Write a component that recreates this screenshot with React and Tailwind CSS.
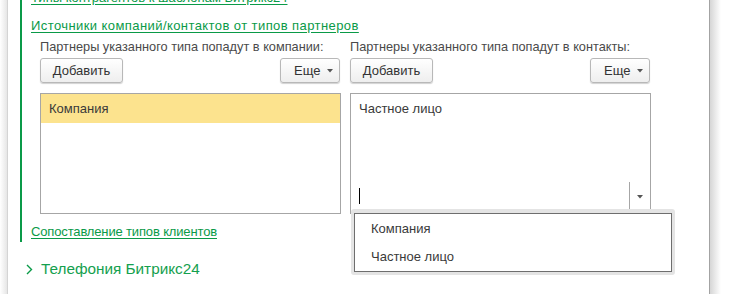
import React from "react";

function Btn({ children, w }) {
  return (
    <div
      className={`${w} h-[25px] flex items-center border border-[#b8b8b8] rounded-[3px] bg-gradient-to-b from-white to-[#eeeeee] shadow-[0_1px_1px_rgba(0,0,0,0.18)] text-[#333] text-[13px] leading-[14px]`}
    >
      {children}
    </div>
  );
}

function Tri({ cls = "" }) {
  return (
    <svg width="6" height="4" viewBox="0 0 6 4" className={cls}>
      <path d="M0 0 L6 0 L3 3.5 Z" fill="#555" />
    </svg>
  );
}

function Column({ label, children }) {
  return (
    <div className="w-[300px] flex flex-col">
      <div className="h-[14px] leading-[14px] text-[12.75px] text-[#4a4a4a] whitespace-nowrap">{label}</div>
      <div className="mt-[4px] flex justify-between">
        <Btn w="w-[83px] justify-center">Добавить</Btn>
        <Btn w="w-[60px] pl-[13px]">
          <span>Еще</span>
          <Tri cls="ml-[7px] mt-[1px]" />
        </Btn>
      </div>
      <div className="mt-[10px] relative h-[121px] w-[301px] border border-[#a6a6a6] bg-white">
        {children}
      </div>
    </div>
  );
}

export default function App() {
  return (
    <div className="w-[749px] h-[294px] overflow-hidden bg-white flex font-['Liberation_Sans',Arial,sans-serif] text-[13px]">
      <div className="w-[7px] h-full bg-gradient-to-r from-white to-[#e6e6e6]" />
      <div className="w-[703px] h-full border-l border-l-[#d4d4d4] border-r border-r-[#a3a3a3] bg-white pl-[12px] flex flex-col">
        <div className="border-l-2 border-[#0a9a48] pl-[9px] pb-[3px] flex flex-col">
          <div className="mt-[-9px] h-[14px] leading-[14px] text-[#0a9a48] underline underline-offset-[2px] whitespace-nowrap">
            Типы контрагентов к шаблонам Битрикс24
          </div>
          <div className="mt-[14px] h-[14px] leading-[14px] text-[#0a9a48] tracking-[0.42px] underline underline-offset-[2px] whitespace-nowrap">
            Источники компаний/контактов от типов партнеров
          </div>
          <div className="mt-[7px] ml-[9px] flex gap-[10px]">
            <Column label="Партнеры указанного типа попадут в компании:">
              <div className="h-[29px] bg-[#fce38e] pl-[8px] flex items-center text-[#3a3a3a]">Компания</div>
            </Column>
            <Column label="Партнеры указанного типа попадут в контакты:">
              <div className="h-full flex flex-col">
                <div className="h-[29px] pl-[8px] flex items-center text-[#3a3a3a]">Частное лицо</div>
                <div className="flex-1" />
                <div className="h-[31px] flex">
                  <div className="flex-1 pl-[8px] pt-[6px]">
                    <div className="w-px h-[16px] bg-black" />
                  </div>
                  <div className="w-[21px] border-l border-[#a6a6a6] flex items-center justify-center pb-[2px]">
                    <Tri />
                  </div>
                </div>
              </div>
              <div className="absolute left-0 top-[115px] w-[324px] h-[66px] border-[3px] border-t-[4px] border-[#e4e4e4] rounded-[3px] z-10">
                <div className="h-full border border-[#6e6e6e] bg-white flex flex-col text-[#3a3a3a]">
                  <div className="h-[29px] pl-[16px] flex items-center">Компания</div>
                  <div className="h-[29px] pl-[16px] flex items-center">Частное лицо</div>
                </div>
              </div>
            </Column>
          </div>
          <div className="mt-[11px] h-[14px] leading-[14px] text-[#0a9a48] tracking-[-0.15px] underline underline-offset-[2px] whitespace-nowrap">
            Сопоставление типов клиентов
          </div>
        </div>
        <div className="mt-[17px] h-[20px] flex items-center">
          <svg width="7" height="11" viewBox="0 0 7 11" className="ml-[6px]">
            <path d="M1 1 L5.5 5.5 L1 10" fill="none" stroke="#0a9a48" strokeWidth="1.4" />
          </svg>
          <span className="ml-[8px] text-[15.3px] leading-[20px] text-[#14a04e] whitespace-nowrap">Телефония Битрикс24</span>
        </div>
      </div>
      <div className="w-[11px] h-full bg-gradient-to-r from-[#d6d6d6] to-white" />
      <div className="flex-1" />
    </div>
  );
}
